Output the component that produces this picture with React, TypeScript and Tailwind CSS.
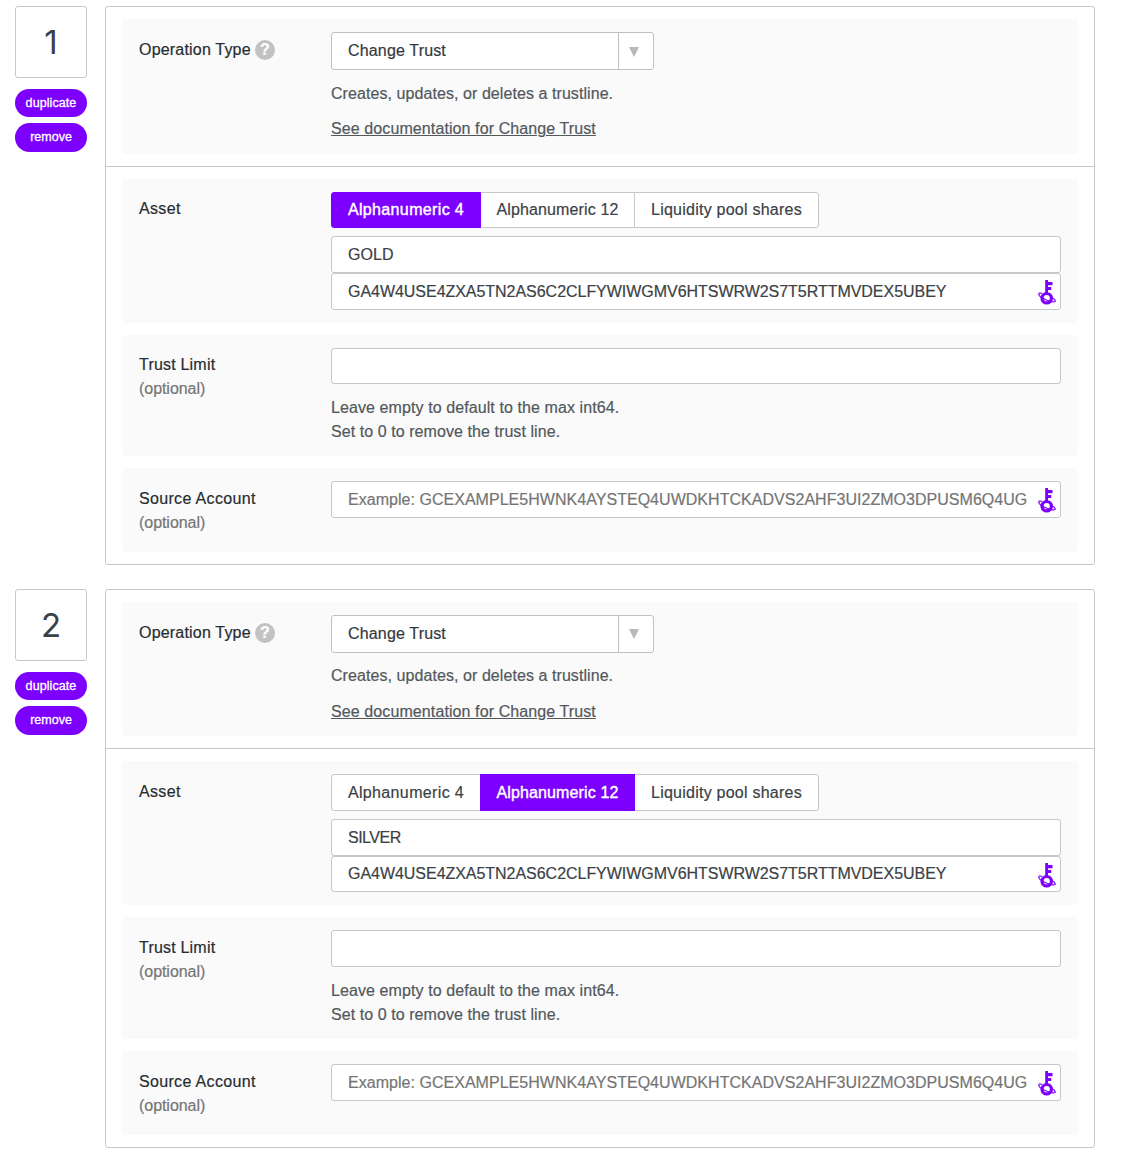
import type { ReactNode } from 'react';

const inputClass =
  'block w-full rounded-[3px] border border-[#c8c8c8] bg-white pl-4 pr-8 pt-px text-base text-[#3b4146] outline-none placeholder:text-[#757575] placeholder:opacity-100';

function KeyIcon() {
  return (
    <svg width="20" height="28" viewBox="0 0 20 28" className="pointer-events-none absolute right-1 top-[5px]" fill="none">
      <path d="M8.200 2H11v2h4.500v3.200H11v1.800h3.200v3H11V16H8.200z" fill="#7d00ff" />
      <circle cx="9.700" cy="20.200" r="4.700" stroke="#7d00ff" strokeWidth="3.200" />
      <path d="M5 15.400C2.800 14.600 1.500 15.100 1.800 16.400c.5 2 4 4.300 8.200 5.900 4.500 1.700 8.200 2.100 8.300.7.1-1-1.300-2.200-3.200-3.300" stroke="#7d00ff" strokeWidth="1.200" />
    </svg>
  );
}

function Row({ label, labelClass, optional, help, className, children }: {
  label: string; labelClass: string; optional?: boolean; help?: boolean; className: string; children: ReactNode;
}) {
  return (
    <div className={`mx-4 flex rounded-[3px] bg-[#fafafa] px-[17px] pt-[13px] ${className}`}>
      <div className={`w-[192px] shrink-0 leading-6 text-[#272d32] ${labelClass}`}>
        <div className="flex items-center">
          <span>{label}</span>
          {help && (
            <span className="ml-1 flex size-5 items-center justify-center rounded-full bg-[#c2c2c2] text-base font-bold leading-5 tracking-normal text-white">?</span>
          )}
        </div>
        {optional && <div className="tracking-[-0.05px] text-[#757575]">(optional)</div>}
      </div>
      <div className="min-w-0 flex-1 text-[#53585c]">{children}</div>
    </div>
  );
}

const types = [
  { name: 'Alphanumeric 4', shape: 'w-[150px] rounded-l-[3px] tracking-[0.36px]' },
  { name: 'Alphanumeric 12', shape: '-ml-px w-[155px] tracking-[0.13px]' },
  { name: 'Liquidity pool shares', shape: '-ml-px w-[185px] rounded-r-[3px] tracking-[0.24px]' },
];

function Operation({ index, code, codeTracking, selected }: {
  index: number; code: string; codeTracking: string; selected: number;
}) {
  return (
    <section className="flex items-start">
      <div className="w-[72px] shrink-0">
        <div className="flex h-[72px] items-center justify-center rounded-[3px] border border-[#c8c8c8] pt-[2px] font-['Inter',sans-serif] text-[33px] text-[#3b4146] [-webkit-text-stroke:0px]">{index}</div>
        <button className="mt-[11px] block h-[28px] w-full rounded-full bg-[#7d00ff] pt-px text-[12.5px] tracking-[0.08px] text-white [-webkit-text-stroke:0.3px]">duplicate</button>
        <button className="mt-[6px] block h-[29px] w-full rounded-full bg-[#7d00ff] text-[12.5px] text-white [-webkit-text-stroke:0.3px]">remove</button>
      </div>
      <div className="ml-[18px] w-[990px] rounded-[3px] border border-[#c8c8c8] pb-3">
        <Row label="Operation Type" labelClass="pt-[6.200px] tracking-[0.19px]" help className="mt-3 h-[134.7px]">
          <div className="flex h-[38px] w-[323px] rounded-[3px] border border-[#c0c0c0] bg-white text-[#33393e]">
            <div className="flex-1 pl-4 leading-[35px] tracking-[0.16px]">Change Trust</div>
            <div className="flex w-[35px] items-center justify-center border-l border-[#c0c0c0] pr-1 pt-px">
              <svg width="10" height="10" viewBox="0 0 10 10"><path d="M0 0h10L5 10z" fill="#b9b9b9" /></svg>
            </div>
          </div>
          <p className="mt-[11.500px] leading-6 tracking-[0.07px]">Creates, updates, or deletes a trustline.</p>
          <p className="mt-[11.500px] leading-6 tracking-[0.1px]"><a className="underline">See documentation for Change Trust</a></p>
        </Row>
        <div className="mt-3 border-t border-[#c8c8c8]" />
        <Row label="Asset" labelClass="pt-[5.500px] tracking-[0.35px]" className="mt-3 h-[143.900px]">
          <div className="flex h-[36.500px] text-[#3b4146]">
            {types.map((t, i) => (
              <button
                key={t.name}
                className={`border text-center leading-[34px] ${t.shape} ${
                  i === selected
                    ? 'relative z-10 border-[#7d00ff] bg-[#7d00ff] text-white [-webkit-text-stroke:0.4px]'
                    : 'border-[#c8c8c8] bg-white'
                }`}
              >
                {t.name}
              </button>
            ))}
          </div>
          <input className={`mt-[8.200px] h-[36.600px] ${codeTracking} ${inputClass}`} defaultValue={code} />
          <div className="relative">
            <input className={`h-[36.600px] tracking-[-0.036px] ${inputClass}`} defaultValue="GA4W4USE4ZXA5TN2AS6C2CLFYWIWGMV6HTSWRW2S7T5RTTMVDEX5UBEY" />
            <KeyIcon />
          </div>
        </Row>
        <Row label="Trust Limit" labelClass="pt-[5.900px] tracking-[0.2px]" optional className="mt-3 h-[121.500px]">
          <input className={`h-[36.600px] ${inputClass}`} />
          <p className="mt-[11.800px] leading-6 tracking-[0.09px]">Leave empty to default to the max int64.</p>
          <p className="leading-6 tracking-[0.07px]">Set to 0 to remove the trust line.</p>
        </Row>
        <Row label="Source Account" labelClass="pt-[5.900px] tracking-[0.33px]" optional className="mt-3 h-[84.100px]">
          <div className="relative">
            <input className={`h-[36.900px] tracking-[0.033px] ${inputClass}`} placeholder="Example: GCEXAMPLE5HWNK4AYSTEQ4UWDKHTCKADVS2AHF3UI2ZMO3DPUSM6Q4UG" />
            <KeyIcon />
          </div>
        </Row>
      </div>
    </section>
  );
}

export default function App() {
  return (
    <main className="flex h-[1163px] w-[1124px] flex-col gap-[23.400px] overflow-hidden bg-white pl-[15px] pt-[6px] font-['Liberation_Sans',Arial,sans-serif] text-base [-webkit-text-stroke:0.2px]">
      <Operation index={1} code="GOLD" codeTracking="tracking-[0.1px]" selected={0} />
      <Operation index={2} code="SILVER" codeTracking="tracking-[-0.5px]" selected={1} />
    </main>
  );
}
